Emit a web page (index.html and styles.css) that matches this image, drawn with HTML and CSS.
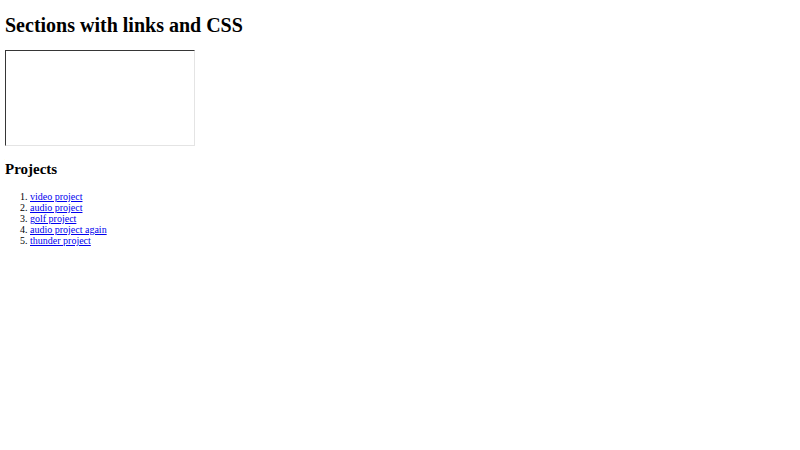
FILE: index.html
```html
<!DOCTYPE html>
<html lang="en">
<head>
  <meta charset="UTF-8">
  <title>Sections with links and CSS</title>
  <link rel="stylesheet" href="styles.css">
</head>
<body>
  <h1>Sections with links and CSS</h1>

  <section class="preview">
    <iframe class="frame" name="project-frame" title="Project preview"></iframe>
  </section>

  <section class="projects">
    <h2>Projects</h2>
    <ol class="project-list">
      <li><a href="#video" target="project-frame">video project</a></li>
      <li><a href="#audio" target="project-frame">audio project</a></li>
      <li><a href="#golf" target="project-frame">golf project</a></li>
      <li><a href="#audio-again" target="project-frame">audio project again</a></li>
      <li><a href="#thunder" target="project-frame">thunder project</a></li>
    </ol>
  </section>
</body>
</html>
```

FILE: styles.css
```css
body {
  margin: 5px;
  font-family: "Liberation Serif", "Times New Roman", serif;
  font-size: 10px;
  color: #000;
  background: #fff;
}

h1 {
  font-size: 20px;
  margin: 8.6px 0 13.4px;
}

h2 {
  font-size: 15px;
  margin: 13.5px 0 12.45px;
}

.frame {
  width: 188px;
  height: 94px;
  border: 1px inset #8a8a8a;
  border-right-color: #e4e4e4;
  border-bottom-color: #e4e4e4;
  background: #fff;
}

.project-list {
  margin: 10px 0;
  padding-left: 25px;
}

.project-list a {
  color: #0000ee;
}
```
